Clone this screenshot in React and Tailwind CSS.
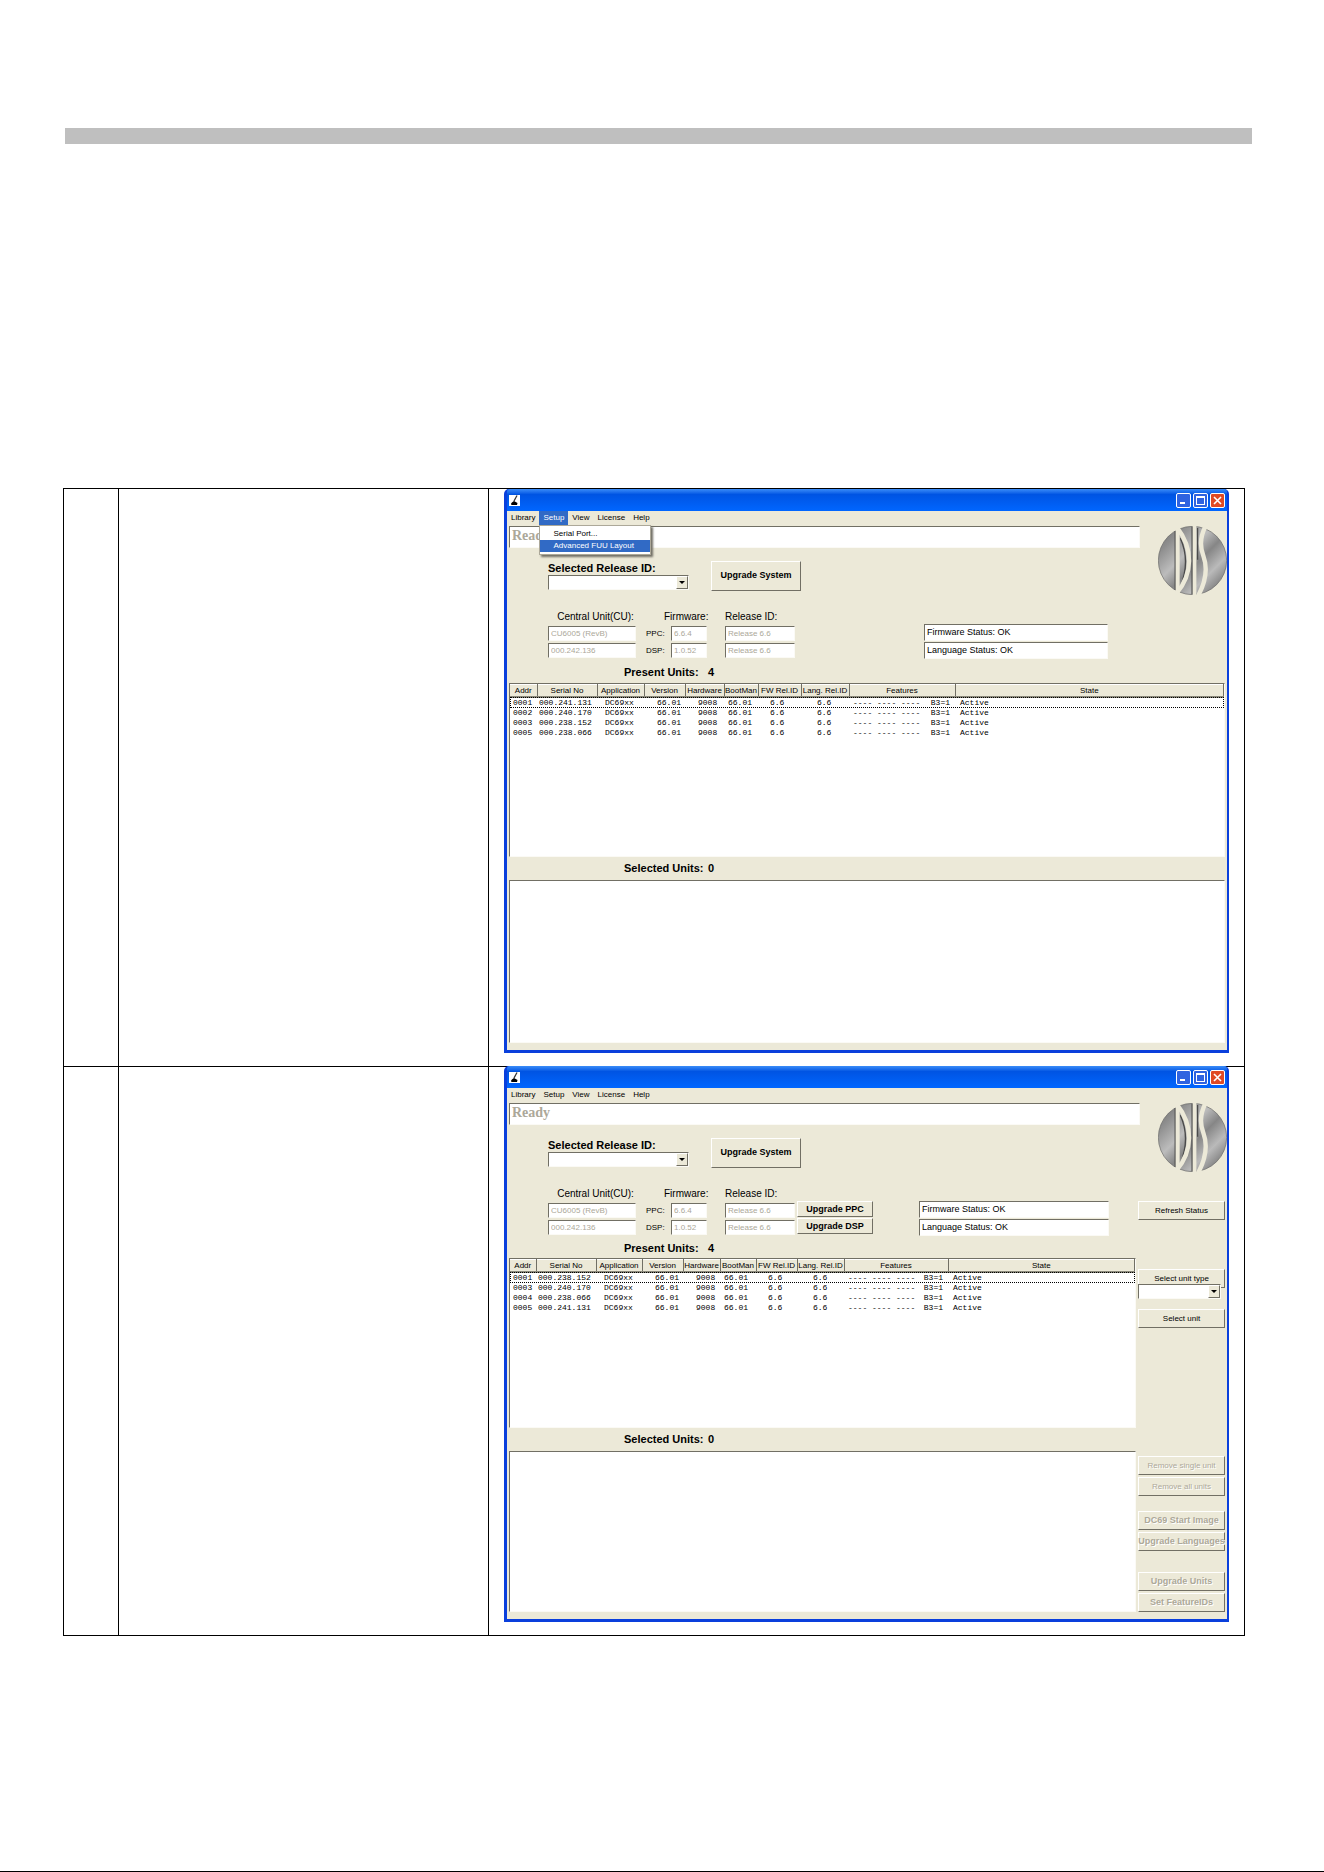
import React from "react";

const menus = ["Library", "Setup", "View", "License", "Help"];

const headers = [
  "Addr",
  "Serial No",
  "Application",
  "Version",
  "Hardware",
  "BootMan",
  "FW Rel.ID",
  "Lang. Rel.ID",
  "Features",
  "State",
];

const inset =
  "border border-t-[#716f64] border-l-[#716f64] border-r-[#fbfaf5] border-b-[#fbfaf5] bg-white";
const raised =
  "border border-t-white border-l-white border-r-[#716f64] border-b-[#716f64] bg-[#ece9d8]";

const AppIcon = () => (
  <svg className="size-[11px] bg-white" viewBox="0 0 11 11">
    <path d="M8 0.5L5 6" stroke="#333" strokeWidth="1.3" />
    <path d="M2 9.5C2 7.5 3.5 7 5 6L8.5 8L8 10H3Z" fill="#000" />
  </svg>
);

const Logo = () => (
  <svg className="size-[69px] shrink-0" viewBox="0 0 204 204">
    <defs>
      <linearGradient id="metal" x1="0" y1="0" x2="1" y2="1">
        <stop offset="0" stopColor="#6a6a6a" />
        <stop offset="0.2" stopColor="#8f8f8f" />
        <stop offset="0.4" stopColor="#bcbcbc" />
        <stop offset="0.55" stopColor="#868686" />
        <stop offset="0.72" stopColor="#bababa" />
        <stop offset="0.88" stopColor="#808080" />
        <stop offset="1" stopColor="#484848" />
      </linearGradient>
    </defs>
    <circle cx="102" cy="102" r="101" fill="url(#metal)" stroke="#666" strokeWidth="2" />
    <path d="M51 15V189M101 2V202M66 36C86 80 86 130 66 180M117 6V100" fill="none" stroke="#4a4a4a" strokeWidth="4" />
    <g fill="none" stroke="#ece9d8">
      <path d="M58 -2V206" strokeWidth="12" />
      <path d="M56 4C104 66 104 142 54 200" strokeWidth="13" />
      <path d="M108 -2V206" strokeWidth="11" />
      <path d="M142 -2C122 34 124 62 134 88C148 126 142 164 118 208" strokeWidth="13" />
    </g>
  </svg>
);

const TitleBar = () => (
  <div className="flex h-[22px] items-center justify-between rounded-t-[3px] bg-linear-to-b from-[#3a8cf8] via-[#0054e3] via-25% to-[#0066ff] pr-[2px] pl-[2px]">
    <AppIcon />
    <div className="flex gap-[2px]">
      <button aria-label="Minimize" className="flex size-[15px] items-end rounded-[2px] border border-white bg-[#2f63e0] p-[3px]">
        <span className="h-[2px] w-[5px] bg-white" />
      </button>
      <button aria-label="Maximize" className="size-[15px] rounded-[2px] border border-white bg-[#2f63e0] p-[2px]">
        <span className="block size-[9px] border border-t-2 border-white" />
      </button>
      <button aria-label="Close" className="size-[15px] rounded-[2px] border border-white bg-[#e04a24] p-[2px]">
        <svg className="size-[9px]" viewBox="0 0 9 9">
          <path d="M1 1L8 8M8 1L1 8" stroke="#fff" strokeWidth="1.6" />
        </svg>
      </button>
    </div>
  </div>
);

const MenuBar = ({ open }) => (
  <nav className="flex h-[15px] text-[8px] leading-[14px]">
    {menus.map((name) => (
      <div key={name} className="relative">
        <button
          className={
            open === name ? "block h-[14px] bg-[#316ac5] px-1 text-white" : "block h-[14px] px-1"
          }
        >
          {name}
        </button>
        {open === name && (
          <div className="absolute top-[14px] left-0 z-10 w-[112px] border border-[#aca899] bg-white py-[2px] shadow-[2px_2px_2px_#716f64] leading-[12px]">
            <button className="block w-full pl-[13px] text-left">Serial Port...</button>
            <button className="block w-full bg-[#316ac5] pl-[13px] text-left text-white">
              Advanced FUU Layout
            </button>
          </div>
        )}
      </div>
    ))}
  </nav>
);

const DropDown = ({ label, className }) => (
  <div className={"relative flex h-[15px] " + className}>
    <select aria-label={label} className={"w-full appearance-none " + inset} />
    <span className={"pointer-events-none absolute top-px right-px bottom-px flex w-[12px] items-center justify-center " + raised}>
      <span className="border-x-[3px] border-t-[3px] border-x-transparent border-t-black" />
    </span>
  </div>
);

const Field = ({ label, value }) => (
  <input
    aria-label={label}
    disabled
    defaultValue={value}
    className={"h-[15px] w-full min-w-0 px-[2px] text-[8px] text-[#aca899] " + inset}
  />
);

const SideButton = ({ children, disabled, className = "" }) => (
  <button
    disabled={disabled}
    className={
      "flex h-[19px] w-full shrink-0 items-center justify-center whitespace-nowrap disabled:text-[#aca899] disabled:[text-shadow:1px_1px_0_#fff] " +
      raised +
      " " +
      className
    }
  >
    {children}
  </button>
);

const Status = ({ advanced }) => (
  <div className={advanced ? "mt-[14px] flex h-[49px] items-start pl-[39px]" : "mt-[14px] flex h-[50px] items-start pl-[39px]"}>
    <div className="grid grid-cols-[88px_10px_25px_36px_18px_70px] gap-y-[2px]">
      <div className="pl-[7px] text-center text-[10px] leading-[15px]">Central Unit(CU):</div>
      <div className="col-span-4 pl-[28px] text-[10px] leading-[15px]">Firmware:</div>
      <div className="text-[10px] leading-[15px]">Release ID:</div>

      <Field label="Central unit" value="CU6005 (RevB)" />
      <span />
      <span className="text-[8px] leading-[15px]">PPC:</span>
      <Field label="PPC firmware" value="6.6.4" />
      <span />
      <Field label="PPC release" value="Release 6.6" />

      <Field label="Serial number" value="000.242.136" />
      <span />
      <span className="text-[8px] leading-[15px]">DSP:</span>
      <Field label="DSP firmware" value="1.0.52" />
      <span />
      <Field label="DSP release" value="Release 6.6" />
    </div>
    {advanced && (
      <div className="ml-[2px] flex w-[76px] flex-col gap-px pt-[15px] text-[9px] leading-[14px] font-bold">
        <button className={"h-4 " + raised}>Upgrade PPC</button>
        <button className={"h-4 " + raised}>Upgrade DSP</button>
      </div>
    )}
    <div
      className={
        advanced
          ? "ml-[46px] flex w-[190px] flex-col gap-px pt-[15px] text-[9px] leading-[15px]"
          : "ml-[129px] flex w-[184px] flex-col gap-px pt-[15px] text-[9px] leading-[15px]"
      }
    >
      <div className={"h-[17px] pl-[2px] " + inset}>Firmware Status: OK</div>
      <div className={"h-[17px] pl-[2px] " + inset}>Language Status: OK</div>
    </div>
    {advanced && (
      <div className="mt-[15px] mr-[2px] ml-auto w-[87px] text-[8px]">
        <SideButton>Refresh Status</SideButton>
      </div>
    )}
  </div>
);

const UnitCount = ({ label, count }) => (
  <div className="flex pl-[115px] text-[11px] leading-[14px] font-bold">
    <span className="w-[84px]">{label}</span>
    <span>{count}</span>
  </div>
);

const WideColumns = () => (
  <colgroup>
    <col className="w-[27px]" />
    <col className="w-[60px]" />
    <col className="w-[47px]" />
    <col className="w-[41px]" />
    <col className="w-[39px]" />
    <col className="w-[34px]" />
    <col className="w-[43px]" />
    <col className="w-[48px]" />
    <col className="w-[106px]" />
    <col />
  </colgroup>
);

const NarrowColumns = () => (
  <colgroup>
    <col className="w-[26px]" />
    <col className="w-[60px]" />
    <col className="w-[46px]" />
    <col className="w-[41px]" />
    <col className="w-[37px]" />
    <col className="w-[36px]" />
    <col className="w-[41px]" />
    <col className="w-[47px]" />
    <col className="w-[104px]" />
    <col />
  </colgroup>
);

const UnitTable = ({ rows, advanced }) => (
  <table className="w-full table-fixed border-collapse text-left">
    {advanced ? <NarrowColumns /> : <WideColumns />}
    <thead className="bg-[#ece9d8] text-[8px] leading-[11px]">
      <tr>
        {headers.map((h) => (
          <th
            key={h}
            className="border-t border-r border-b-2 border-t-white border-r-[#716f64] border-b-[#8a887a] p-0 text-center font-normal whitespace-nowrap"
          >
            {h}
          </th>
        ))}
      </tr>
    </thead>
    <tbody className="font-['Liberation_Mono',monospace] text-[8px] leading-[10px] whitespace-nowrap">
      {rows.map(([addr, serial], i) => (
        <tr key={addr} className={i === 0 ? "outline-1 -outline-offset-1 outline-black outline-dotted" : ""}>
          <td className="p-0 pl-[3px]">{addr}</td>
          <td className="p-0 pl-[2px]">{serial}</td>
          <td className="p-0 pl-2">DC69xx</td>
          <td className="p-0 pl-[13px]">66.01</td>
          <td className="p-0 pl-[13px]">9008</td>
          <td className="p-0 pl-1">66.01</td>
          <td className="p-0 pl-3">6.6</td>
          <td className="p-0 pl-4">6.6</td>
          <td className="p-0 pl-1">
            <div className="flex justify-between pr-[5px]">
              <span>---- ---- ----</span>
              <span>B3=1</span>
            </div>
          </td>
          <td className="p-0 pl-[5px]">Active</td>
        </tr>
      ))}
    </tbody>
  </table>
);

const Sidebar = () => (
  <div className="flex w-[87px] shrink-0 flex-col pt-[34px] text-[8px]">
    <SideButton>Select unit type</SideButton>
    <DropDown label="Unit type" className="-mt-1 mr-1" />
    <SideButton className="mt-[10px]">Select unit</SideButton>
    <div className="mt-auto flex flex-col gap-[2px]">
      <SideButton disabled>Remove single unit</SideButton>
      <SideButton disabled>Remove all units</SideButton>
    </div>
    <div className="mt-[15px] flex flex-col gap-[2px] text-[9px] font-bold">
      <SideButton disabled>DC69 Start Image</SideButton>
      <SideButton disabled>Upgrade Languages</SideButton>
    </div>
    <div className="mt-[21px] flex flex-col gap-[2px] text-[9px] font-bold">
      <SideButton disabled>Upgrade Units</SideButton>
      <SideButton disabled>Set FeatureIDs</SideButton>
    </div>
  </div>
);

const UpgradeWindow = ({ rows, open, advanced }) => (
  <div className="rounded-t-[5px] border-r-2 border-b-[3px] border-l-[3px] border-[#0a3fdc] bg-[#0a3fdc]">
    <TitleBar />
    <div className="bg-[#ece9d8]">
      <MenuBar open={open} />
      <div className="pl-[2px]">
        <div className="flex justify-between">
          <div className="grow">
            <div className={"mr-[18px] h-[22px] pl-[2px] font-['Liberation_Serif',serif] text-[14px] leading-[18px] font-bold text-[#aca899] " + inset}>
              Ready
            </div>
            <div className="mt-[13px] flex pl-[39px]">
              <div className="w-[141px]">
                <div className="text-[11px] leading-[14px] font-bold whitespace-nowrap">
                  Selected Release ID:
                </div>
                <DropDown label="Selected Release ID" className="w-full" />
              </div>
              <button className={"ml-[22px] h-[30px] w-[90px] text-[9px] font-bold " + raised}>
                Upgrade System
              </button>
            </div>
          </div>
          <Logo />
        </div>
        <Status advanced={advanced} />
        <div className="flex gap-[2px] pr-[2px]">
          <div className={advanced ? "min-w-0 grow pt-[6px] pb-[7px]" : "min-w-0 grow pt-[6px] pb-[7px]"}>
            <UnitCount label="Present Units:" count={4} />
            <div className={advanced ? "mt-[3px] h-[170px] " + inset : "mt-1 h-[174px] " + inset}>
              <UnitTable rows={rows} advanced={advanced} />
            </div>
            <div className="mt-1 mb-[5px]">
              <UnitCount label="Selected Units:" count={0} />
            </div>
            <div className={advanced ? "h-[161px] " + inset : "h-[163px] " + inset} />
          </div>
          {advanced && (
            <div className="flex pb-[7px]">
              <Sidebar />
            </div>
          )}
        </div>
      </div>
    </div>
  </div>
);

const Row = ({ children }) => (
  <div className="flex border-t border-black">
    <div className="w-[55px] shrink-0 border-l border-black" />
    <div className="w-[370px] shrink-0 border-l border-black" />
    <div className="min-w-0 grow border-l border-black px-[15px] pb-[13px]">{children}</div>
  </div>
);

const App = () => {
  return (
    <main className="min-h-screen border-b border-black bg-white pt-32 font-['Liberation_Sans',sans-serif] text-black">
      <div className="mr-[72px] ml-[65px] h-4 bg-[#bfbfbf]" />
      <div className="mt-[344px] mr-[79px] ml-[63px] border-r border-b border-black">
        <Row>
          <UpgradeWindow
            open="Setup"
            rows={[
              ["0001", "000.241.131"],
              ["0002", "000.240.170"],
              ["0003", "000.238.152"],
              ["0005", "000.238.066"],
            ]}
          />
        </Row>
        <Row>
          <div className="-mt-px">
            <UpgradeWindow
              advanced
              rows={[
                ["0001", "000.238.152"],
                ["0003", "000.240.170"],
                ["0004", "000.238.066"],
                ["0005", "000.241.131"],
              ]}
            />
          </div>
        </Row>
      </div>
    </main>
  );
};

export default App;
